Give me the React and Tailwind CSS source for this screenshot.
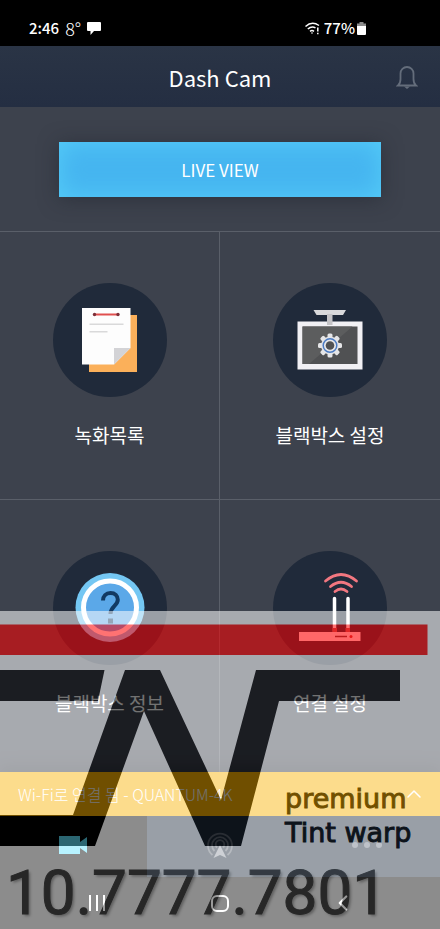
import { ChevronLeft, ChevronUp } from 'lucide-react';

function BellIcon() {
  return (
    <svg width="22" height="24" viewBox="0 0 22 24" fill="none" stroke="currentColor" strokeWidth="1.800" aria-hidden="true">
      <path d="M2 20.500Q4.500 18.500 4.500 14V8.500a6.500 6.500 0 0 1 13 0V14q0 4.500 2.500 6.500z" />
      <path d="M8 21.500h6l-3 2.500z" fill="currentColor" stroke="none" />
    </svg>
  );
}

function FilesIcon() {
  return (
    <svg viewBox="0 0 114 114" className="w-full h-full" aria-hidden="true">
      <path d="M36 32h48v57H36z" fill="#fbb05a" />
      <path d="M29 25h48.500v40L61 81.500H29z" fill="#fdfdfd" />
      <path d="M77.500 65H61v16.500z" fill="#d3d3d6" />
      <path d="M42 31.500h23" stroke="#e0504f" strokeWidth="2" />
      <circle cx="41.500" cy="31.500" r="1.700" fill="#7c2f38" />
      <circle cx="65" cy="31.500" r="1.700" fill="#7c2f38" />
      <path d="M36.500 41.300h34M36.500 48.800h18" stroke="#d9d9da" strokeWidth="1.500" />
    </svg>
  );
}

function MonitorIcon() {
  const teeth = [0, 45, 90, 135, 180, 225, 270, 315];
  return (
    <svg viewBox="0 0 114 114" className="w-full h-full" aria-hidden="true">
      <path d="M24.500 38.500h65v48h-65z" fill="#f1f0f4" />
      <path d="M29.500 43.500h55v37.500h-55z" fill="#505153" />
      <path d="M29.500 43.500h50L36 81h-6.500z" fill="#5c5d5e" />
      <path d="M40.500 27H73l-3 5H43.500z" fill="#d9d9db" />
      <path d="M54 31h5.500v11H54z" fill="#c4c3c6" />
      <g fill="#e6e6e8">
        {teeth.map((deg) => (
          <rect key={deg} x="54.500" y="50.500" width="5" height="5" rx="1.500" transform={`rotate(${deg} 57 62.500)`} />
        ))}
      </g>
      <circle cx="57" cy="62.500" r="9" fill="#e6e6e8" />
      <circle cx="57" cy="62.500" r="6.800" fill="none" stroke="#4c7cc4" strokeWidth="1.500" />
      <circle cx="57" cy="62.500" r="4.300" fill="#505153" />
    </svg>
  );
}

function InfoIcon() {
  return (
    <svg viewBox="0 0 114 114" className="w-full h-full" aria-hidden="true">
      <circle cx="57" cy="56.500" r="34.500" fill="#74c7f3" />
      <circle cx="57" cy="56.500" r="26.500" fill="#5ba8e8" stroke="#fff" strokeWidth="5" />
      <path d="M50 49.500c0-4.500 3-7.500 7.500-7.500s7.300 2.800 7.300 6.800c0 6-7.300 6.500-7.300 14.200" fill="none" stroke="#123a63" strokeWidth="4" />
      <path d="M55 67.500h5v5h-5z" fill="#123a63" />
    </svg>
  );
}

function RouterIcon() {
  return (
    <svg viewBox="0 0 114 114" className="w-full h-full" aria-hidden="true">
      <g fill="none" stroke="#f27780" strokeWidth="2.800" strokeLinecap="round">
        <path d="M52.500 30q15.500-13 31 0" />
        <path d="M57.500 35.500q10.500-8.500 21 0" />
        <path d="M62 40.500q6-5 12 0" />
      </g>
      <path d="M61.500 47.500v33M75 47.500v33" stroke="#fff" strokeWidth="3.500" strokeLinecap="round" />
      <path d="M59.500 77h4.500v4h-4.500zM72.500 77H77v4h-4.500z" fill="#b55" />
      <path d="M26 81h61.500v9H26z" fill="#ffe6e8" />
      <path d="M62 85.500h12" stroke="#6b3a40" strokeWidth="1.500" />
      <circle cx="78" cy="85.500" r="1.500" fill="#c33" />
    </svg>
  );
}

function Tile({ label, icon, className }) {
  return (
    <button className={`flex flex-col items-center pt-[51px] pb-[50px] border-[#5a5f69] ${className}`}>
      <span className="block w-[114px] h-[114px] rounded-full bg-[#202a3a]">{icon}</span>
      <span className="mt-6 text-[19px] leading-7 text-white">{label}</span>
    </button>
  );
}

function StatusBar() {
  return (
    <div className="h-[46px] pt-2.5 flex items-center justify-between bg-black text-white pl-[29px] pr-[74px]">
      <div className="flex items-center gap-1.5">
        <span className="text-[15px] leading-5 font-medium">2:46</span>
        <span className="text-lg leading-5 font-light">8°</span>
        <svg width="14" height="14" viewBox="0 0 14 14" fill="#fff" aria-hidden="true">
          <path d="M1 1h12q1 0 1 1v7q0 1-1 1H7l-3.500 4v-4H1q-1 0-1-1V2q0-1 1-1z" />
        </svg>
      </div>
      <div className="flex items-center gap-1">
        <svg width="15" height="13" viewBox="0 0 15 13" fill="none" stroke="#fff" strokeWidth="1.500" aria-hidden="true">
          <path d="M.5 4.500Q7-1.500 14 3.500M2.800 7Q7 3.500 10.500 6M5 9.300q2-1.500 4 0" />
          <circle cx="7" cy="11" r=".8" fill="#fff" stroke="none" />
          <path d="M12.800 5.500v4M12.800 10.700v1.500" />
        </svg>
        <span className="flex items-center gap-0.5">
          <span className="text-[15px] leading-5 font-medium">77%</span>
          <svg width="9" height="13" viewBox="0 0 9 13" aria-hidden="true">
            <path d="M2.500 0h4v1.500H9V4H0V1.500h2.500z" fill="#8b8b8b" />
            <path d="M0 4h9v8q0 1-1 1H1q-1 0-1-1z" fill="#fff" />
          </svg>
        </span>
      </div>
    </div>
  );
}

// Translucent shop stamp laid over the lower part of the screen
function Watermark() {
  return (
    <div className="absolute inset-x-0 bottom-0 h-[318px] overflow-hidden bg-white opacity-55 pointer-events-none">
      <svg width="440" height="318" viewBox="0 0 440 318" className="block" aria-hidden="true">
        <path d="M0 13.500h427.500V44H0z" fill="#f00" />
        <path d="M0 59h104.500L98 90H0z" fill="#000" />
        <path d="M125 59h35l61 130 35-130h144v31H279l-38 145h-36L144 100 95 235H0v-31h73z" fill="#000" />
      </svg>
      <p className="absolute left-[285px] top-[171px] font-['DejaVu_Sans'] text-[27px] leading-[34px] text-black whitespace-nowrap [-webkit-text-stroke:1px_#000]">
        premium
        <br />
        Tint warp
      </p>
      <p className="absolute left-1.5 top-[246px] font-['Roboto'] text-[62px] leading-[72px] text-[#484848] whitespace-nowrap [-webkit-text-stroke:1px_#484848] [text-shadow:2px_2px_3px_#aaa]">
        10.7777.7801
      </p>
    </div>
  );
}

export default function App() {
  return (
    <div className="relative min-h-screen flex flex-col bg-[#3d424d] font-['Noto_Sans_CJK_KR',sans-serif]">
      <StatusBar />

      <header className="h-[61px] grid grid-cols-[1fr_auto_1fr] items-center px-[22px] bg-linear-to-b from-[#2a3445] to-[#242e42]">
        <h1 className="col-start-2 text-[22px] leading-8 text-white">Dash Cam</h1>
        <button aria-label="Notifications" className="justify-self-end text-[#646d7b]">
          <BellIcon />
        </button>
      </header>

      <div className="px-[59px] pt-[35px] pb-[34px]">
        <button className="block w-full h-[55px] text-[17px] text-white bg-[#46b5f0] shadow-[0_2px_20px_rgba(30,34,44,0.5),inset_0_0_24px_#55cdf8]">
          LIVE VIEW
        </button>
      </div>

      <main className="flex-1 grid grid-cols-2 grid-rows-[auto_1fr] border-t border-[#5a5f69]">
        <Tile label="녹화목록" icon={<FilesIcon />} className="border-r border-b" />
        <Tile label="블랙박스 설정" icon={<MonitorIcon />} className="border-b" />
        <Tile label="블랙박스 정보" icon={<InfoIcon />} className="border-r" />
        <Tile label="연결 설정" icon={<RouterIcon />} className="" />
      </main>

      <button className="h-11 flex items-center justify-between pl-[18px] pr-3.5 bg-[#fab200] text-white shadow-[0_-4px_16px_rgba(20,24,32,0.4)]">
        <span className="text-base font-light">Wi-Fi로 연결 됨 - QUANTUM-4K</span>
        <ChevronUp size={24} strokeWidth={1.5} />
      </button>

      <nav className="h-[61px] grid grid-cols-3 bg-[#1d2b3c]">
        <button aria-label="Camera" className="flex items-center justify-center pb-1 bg-black">
          <svg width="28" height="18" viewBox="0 0 28 18" fill="#60e4ff" aria-hidden="true">
            <path d="M0 0h21v6l7-5v16l-7-5v6H0z" />
          </svg>
        </button>
        <button aria-label="Broadcast" className="flex items-center justify-center pb-1">
          <svg width="28" height="28" viewBox="0 0 28 28" fill="none" stroke="#5d6673" strokeWidth="1.800" aria-hidden="true">
            <path d="M6.500 24A12 12 0 1 1 21.500 24M8.500 20A8 8 0 1 1 19.500 20M11 16.500A4.300 4.300 0 1 1 17 16.500" />
            <path d="M14 14l6.500 13-6.500-3-6.500 3z" fill="#929aa5" stroke="none" />
          </svg>
        </button>
        <button aria-label="More" className="flex items-center justify-center gap-1.5 pb-1">
          <span className="w-1.5 h-1.5 rounded-full bg-[#6f7987]" />
          <span className="w-1.5 h-1.5 rounded-full bg-[#6f7987]" />
          <span className="w-1.5 h-1.5 rounded-full bg-[#6f7987]" />
        </button>
      </nav>

      <div className="h-[52px] grid grid-cols-3 px-9 bg-black text-white">
        <button aria-label="Recent apps" className="flex items-center justify-center gap-[5px]">
          <span className="w-0.5 h-4 bg-white" />
          <span className="w-0.5 h-4 bg-white" />
          <span className="w-0.5 h-4 bg-white" />
        </button>
        <button aria-label="Home" className="flex items-center justify-center">
          <span className="w-[18px] h-[17px] rounded-md border-2 border-white" />
        </button>
        <button aria-label="Back" className="flex items-center justify-center">
          <ChevronLeft size={26} strokeWidth={2} />
        </button>
      </div>

      <Watermark />
    </div>
  );
}
